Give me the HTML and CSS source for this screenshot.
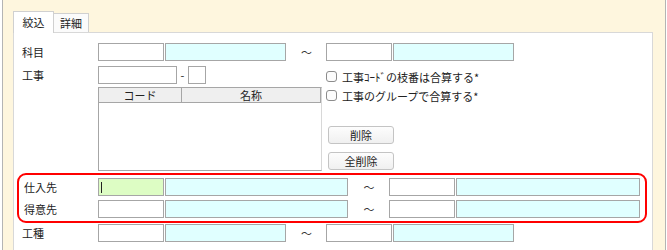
FILE: index.html
```html
<!DOCTYPE html>
<html lang="ja">
<head>
    <meta charset="UTF-8">
    <title>絞込</title>
    <link rel="stylesheet" href="styles.css">
</head>
<body>
    <div class="frame">
        <div class="tabs">
            <div class="tab active">絞込</div>
            <div class="tab">詳細</div>
        </div>

        <div class="panel">
            <!-- 科目 -->
            <div class="row">
                <span class="label">科目</span>
                <input type="text" class="box code">
                <input type="text" class="box name w121">
                <span class="tilde narrow">～</span>
                <input type="text" class="box code">
                <input type="text" class="box name w121">
            </div>

            <!-- 工事 -->
            <div class="block">
                <span class="label">工事</span>
                <div class="block-left">
                    <div class="row-inner">
                        <input type="text" class="box w79">
                        <span class="dash">-</span>
                        <input type="text" class="box w18">
                    </div>
                    <div class="grid">
                        <div class="grid-head">
                            <span class="col-code">コード</span>
                            <span class="col-name">名称</span>
                        </div>
                    </div>
                </div>
                <div class="block-right">
                    <label class="check"><span class="checkbox"></span>工事ｺｰﾄﾞの枝番は合算する*</label>
                    <label class="check"><span class="checkbox"></span>工事のグループで合算する*</label>
                    <div class="buttons">
                        <button class="btn">削除</button>
                        <button class="btn">全削除</button>
                    </div>
                </div>
            </div>

            <!-- 仕入先 / 得意先 -->
            <div class="highlight">
                <div class="row">
                    <span class="label">仕入先</span>
                    <span class="caret-wrap"><input type="text" class="box code active-input"></span>
                    <input type="text" class="box name w183">
                    <span class="tilde">～</span>
                    <input type="text" class="box code">
                    <input type="text" class="box name w184">
                </div>
                <div class="row">
                    <span class="label">得意先</span>
                    <input type="text" class="box code">
                    <input type="text" class="box name w183">
                    <span class="tilde">～</span>
                    <input type="text" class="box code">
                    <input type="text" class="box name w184">
                </div>
            </div>

            <!-- 工種 -->
            <div class="row last">
                <span class="label">工種</span>
                <input type="text" class="box code">
                <input type="text" class="box name w121">
                <span class="tilde narrow">～</span>
                <input type="text" class="box code">
                <input type="text" class="box name w121">
            </div>
        </div>
    </div>
</body>
</html>
```

FILE: styles.css
```css
html, body {
    margin: 0;
    padding: 0;
    height: 100%;
    background-color: #ffffff;
    overflow: hidden;
}
body {
    font-family: "Noto Sans CJK JP", "Noto Sans", sans-serif;
    font-size: 11px;
    color: #222;
}
.frame {
    margin-left: 2px;
    width: 664px;
    height: 100%;
    border-left: 1px solid #b4b4b4;
    border-right: 1px solid #b4b4b4;
    background-color: #fef6de;
    padding: 11px 0 0 10px;
    box-sizing: border-box;
}

/* Tabs */
.tabs {
    display: flex;
    align-items: flex-end;
    height: 21px;
}
.tab {
    height: 19px;
    line-height: 18px;
    padding: 0;
    text-align: center;
    white-space: nowrap;
    border: 1px solid #d0d0d0;
    border-bottom: none;
    background-color: #fbfbfb;
    box-sizing: border-box;
}
.tab.active {
    width: 41px;
    height: 22px;
    line-height: 20px;
    background-color: #ffffff;
    position: relative;
    z-index: 1;
    margin-bottom: -1px;
}
.tab + .tab {
    border-left: none;
    width: 35px;
}

/* Panel */
.panel {
    width: 640px;
    height: 230px;
    background-color: #ffffff;
    border: 1px solid #d8d8d8;
    box-sizing: border-box;
    padding: 10px 0 0 3px;
}
.row {
    display: flex;
    align-items: center;
    height: 18px;
    padding-left: 5px;
}
.label {
    width: 76px;
    flex-shrink: 0;
    line-height: 18px;
    align-self: flex-start;
}
.box {
    height: 18px;
    box-sizing: border-box;
    border: 1px solid #a6a6a6;
    background-color: #ffffff;
    margin: 0 1px 0 0;
    padding: 0;
    font: inherit;
    outline: none;
}
.code { width: 66px; }
.name { background-color: #e0ffff; }
.w121 { width: 121px; }
.w183 { width: 183px; }
.w184 { width: 184px; }
.w79 { width: 79px; }
.w18 { width: 18px; }
.tilde {
    width: 40px;
    text-align: center;
    line-height: 18px;
    color: #333;
}
.tilde.narrow {
    width: 39px;
}
.active-input {
    background-color: #ddfdc4;
}
.caret-wrap {
    position: relative;
    display: flex;
}
.caret-wrap::after {
    content: "";
    position: absolute;
    left: 3px;
    top: 4px;
    width: 1px;
    height: 11px;
    background-color: #222;
}

/* 工事 block */
.block {
    display: flex;
    padding-left: 5px;
    margin-top: 5px;
}
.block-left {
    width: 224px;
}
.row-inner {
    display: flex;
    align-items: center;
    height: 18px;
}
.dash {
    width: 9px;
    text-align: center;
    margin-right: 1px;
    line-height: 18px;
}
.grid {
    margin-top: 3px;
    height: 84px;
    border: 1px solid #a6a6a6;
    border-right-color: #d8d8d8;
    box-sizing: border-box;
}
.grid-head {
    display: flex;
    height: 15px;
    line-height: 14px;
    background-color: #efefef;
    border-bottom: 1px solid #a6a6a6;
    box-sizing: border-box;
}
.col-code {
    width: 82px;
    text-align: center;
    border-right: 1px solid #a6a6a6;
}
.col-name {
    flex: 1;
    text-align: center;
    border-right: 1px solid #a6a6a6;
}
.block-right {
    margin-left: 4px;
    padding-top: 1px;
}
.check {
    display: flex;
    align-items: center;
    height: 19px;
}
.checkbox {
    width: 11px;
    height: 11px;
    box-sizing: border-box;
    border: 1px solid #8c8c8c;
    border-radius: 3px;
    background-color: #fcfcfc;
    margin-right: 5px;
}
.buttons {
    display: flex;
    flex-direction: column;
    gap: 8px;
    margin-top: 21px;
    margin-left: 2px;
}
.btn {
    width: 66px;
    height: 18px;
    padding: 0;
    font: inherit;
    color: #222;
    border: 1px solid #c4c4c4;
    border-radius: 3px;
    background: linear-gradient(#fdfdfd, #f0f0f0);
    line-height: 16px;
}

/* Highlight box */
.highlight {
    width: 630px;
    margin-top: 2px;
    border: 2px solid #ff0000;
    border-radius: 9px;
    padding: 3px 0;
    box-sizing: border-box;
    display: flex;
    flex-direction: column;
    gap: 4px;
}
.highlight .label {
    width: 74px;
}
.row.last {
    margin-top: 1px;
}
```
